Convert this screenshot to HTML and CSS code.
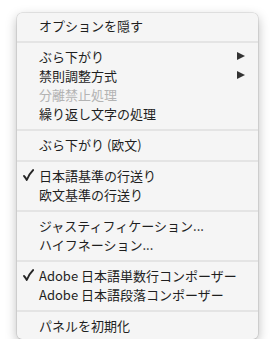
FILE: index.html
```html
<!doctype html>
<html lang="ja">
  <head>
    <meta charset="UTF-8" />
    <title>パネルメニュー</title>
    <link rel="stylesheet" href="styles.css">
  </head>
  <body>
    <div class="menu">
      <div class="item">オプションを隠す</div>
      <div class="sep"></div>
      <div class="item">ぶら下がり<span class="arrow"></span></div>
      <div class="item">禁則調整方式<span class="arrow"></span></div>
      <div class="item disabled">分離禁止処理</div>
      <div class="item">繰り返し文字の処理</div>
      <div class="sep"></div>
      <div class="item">ぶら下がり (欧文)</div>
      <div class="sep"></div>
      <div class="item">
        <svg class="check" width="11" height="12" viewBox="0 0 11 12"><path d="M1 7 Q2.5 8.5 3.8 11 Q6 5 10.2 1" fill="none" stroke="#262626" stroke-width="1.8" stroke-linecap="round" stroke-linejoin="round"/></svg>
        日本語基準の行送り
      </div>
      <div class="item">欧文基準の行送り</div>
      <div class="sep"></div>
      <div class="item">ジャスティフィケーション...</div>
      <div class="item">ハイフネーション...</div>
      <div class="sep"></div>
      <div class="item">
        <svg class="check" width="11" height="12" viewBox="0 0 11 12"><path d="M1 7 Q2.5 8.5 3.8 11 Q6 5 10.2 1" fill="none" stroke="#262626" stroke-width="1.8" stroke-linecap="round" stroke-linejoin="round"/></svg>
        Adobe 日本語単数行コンポーザー
      </div>
      <div class="item">Adobe 日本語段落コンポーザー</div>
      <div class="sep"></div>
      <div class="item">パネルを初期化</div>
    </div>
  </body>
</html>
```

FILE: styles.css
```css
body {
  margin: 0;
  background-color: #ffffff;
  font-family: "Noto Sans CJK JP", "Noto Sans", sans-serif;
}
.menu {
  margin: 13px 0 0 17px;
  width: 241px;
  box-sizing: border-box;
  padding: 3px 0 4px;
  background-color: #f5f5f5;
  border-radius: 5px;
  box-shadow: 0 0 0 0.5px rgba(0, 0, 0, 0.15), 0 4px 12px rgba(0, 0, 0, 0.28);
}
.item {
  position: relative;
  height: 19px;
  line-height: 19px;
  padding-left: 22px;
  font-size: 13px;
  color: #1f1f1f;
  white-space: nowrap;
}
.item.disabled {
  color: #b3b3b3;
}
.check {
  position: absolute;
  left: 6px;
  top: 3px;
}
.arrow {
  position: absolute;
  right: 13px;
  top: 5px;
  width: 0;
  height: 0;
  border-top: 4.5px solid transparent;
  border-bottom: 4.5px solid transparent;
  border-left: 8px solid #333333;
}
.sep {
  height: 2px;
  margin: 6px 0 4px;
  background-color: #e4e4e4;
}
```
